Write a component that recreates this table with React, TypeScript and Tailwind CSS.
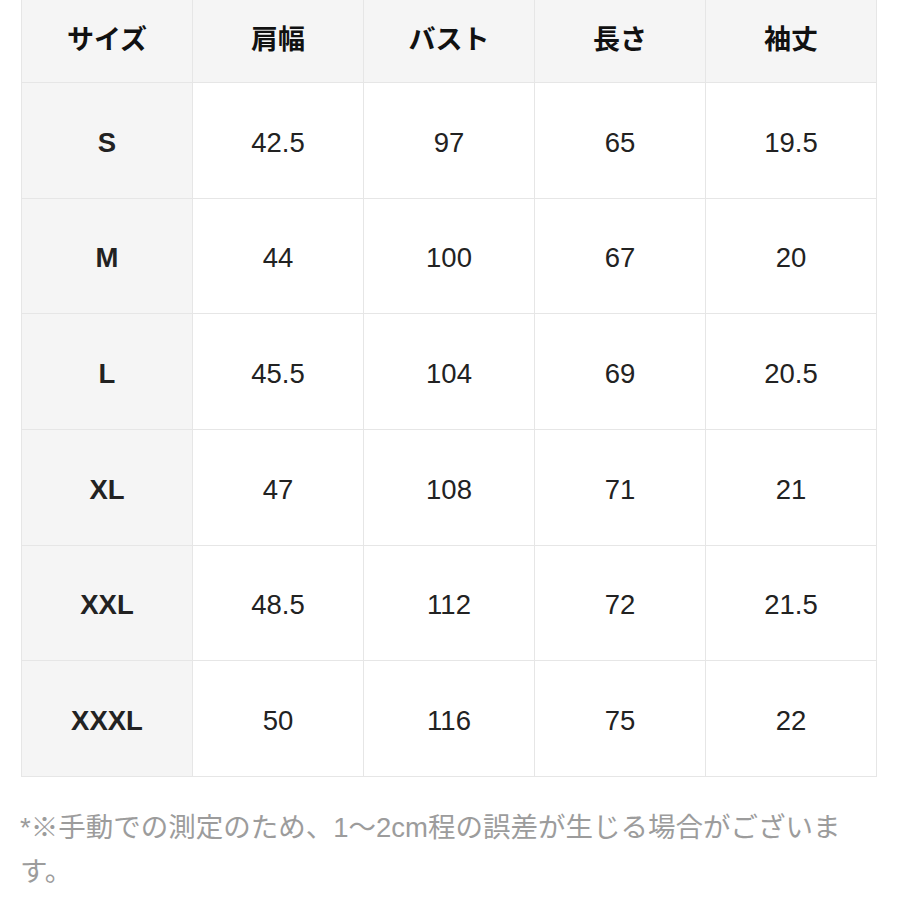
const headers = ["サイズ", "肩幅", "バスト", "長さ", "袖丈"];

const rows = [
	["S", "42.5", "97", "65", "19.5"],
	["M", "44", "100", "67", "20"],
	["L", "45.5", "104", "69", "20.5"],
	["XL", "47", "108", "71", "21"],
	["XXL", "48.5", "112", "72", "21.5"],
	["XXXL", "50", "116", "75", "22"],
];

export default function App() {
	return (
		<div className="min-h-[900px] w-[900px] bg-white font-['Liberation_Sans','Noto_Sans_CJK_JP',sans-serif]">
			<div className="ml-[21px] grid w-[856px] grid-cols-5 border-l border-[#e6e6e6]">
				{headers.map((h) => (
					<div
						key={h}
						className="flex h-[83px] items-center justify-center border-r border-b border-[#e6e6e6] bg-[#f5f5f5] pb-[2px] text-[27px] font-bold text-[#111]"
					>
						{h}
					</div>
				))}
				{rows.map((row) =>
					row.map((cell, i) => (
						<div
							key={row[0] + i}
							className={`flex h-[115.7px] items-center justify-center border-r border-b border-[#e6e6e6] pt-[4px] text-[27.5px] text-[#222] ${
								i === 0 ? "bg-[#f5f5f5] font-bold text-[#111]" : "bg-white"
							}`}
						>
							{cell}
						</div>
					)),
				)}
			</div>
			<p className="mt-[29px] w-[872px] pl-[20px] text-[27.5px] leading-[44px] text-[#9c9c9c]">
				*※手動での測定のため、1〜2cm程の誤差が生じる場合がございます。
			</p>
		</div>
	);
}
